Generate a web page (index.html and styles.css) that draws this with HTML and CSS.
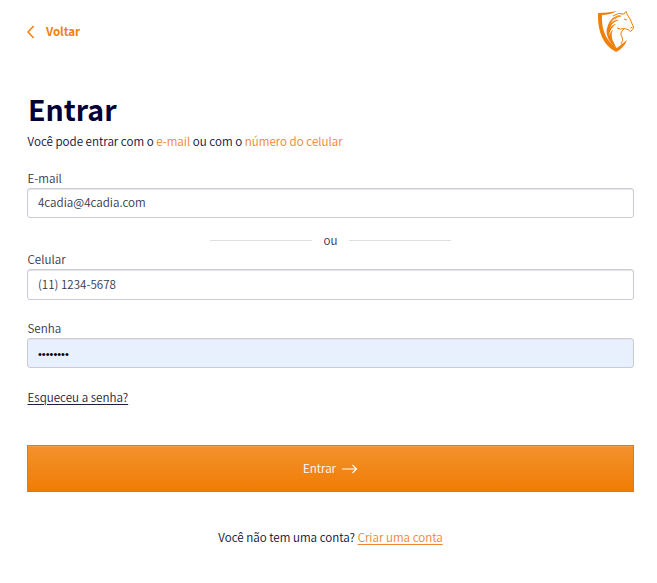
FILE: index.html
```html
<!DOCTYPE html>
<html lang="pt-BR">
<head>
<meta charset="utf-8">
<title>Entrar</title>
<link rel="stylesheet" href="styles.css">
</head>
<body>
<main class="page">
  <header class="topbar">
    <a class="back"><svg width="8" height="14" viewBox="0 0 8 14"><path d="M6.700 1 1 7l5.700 6"/></svg><span>Voltar</span></a>
    <svg class="logo" width="38" height="42" viewBox="0 0 38 42">
      <path class="fill" d="M1 2Q11 2 20 0Q13 4 5 4Q4 27 20 37L30 29Q27 37 19 41Q0 31 1 2Z"/>
      <path class="fill" d="M14 32Q7 23 11 14Q14 5 26 3Q17 6 13 13Q18 8 22 9Q15 11 13 17Q16 13 19 13Q13 17 12 25Q14 20 16 18Q13 25 17 32L19 36Q16 35 14 32Z"/>
      <path class="line" d="M16 5Q21 1 27 3L29 .5 30.500 4 33 8 36.500 16 36 18 33.500 20.500 31 18.500 27 17.500Q23 19 20 17M27 18Q22 22 25 26Q27 29 24 33M27 8l3 1M33.500 17l2-1M24 5q-3 0-6 3"/>
    </svg>
  </header>
  <h1>Entrar</h1>
  <p class="intro">Você pode entrar com o <a>e-mail</a> ou com o <a>número do celular</a></p>
  <form>
    <label for="email">E-mail</label>
    <input id="email" type="text" value="4cadia@4cadia.com">
    <div class="divider"><span>ou</span></div>
    <label for="phone">Celular</label>
    <input class="phone" id="phone" type="text" value="(11) 1234-5678">
    <label for="password">Senha</label>
    <input class="password" id="password" type="text" value="••••••••">
    <a class="forgot">Esqueceu a senha?</a>
    <button type="button"><span>Entrar</span><svg width="16" height="10" viewBox="0 0 16 10"><path d="M0 5h14.500M10.500 1l4 4-4 4"/></svg></button>
  </form>
  <p class="signup">Você não tem uma conta? <a>Criar uma conta</a></p>
</main>
</body>
</html>
```
FILE: styles.css
```css
* { box-sizing: border-box; }
body { margin: 0; background: #fff; color: #0b0b35; font: 350 11.6px/18px "Noto Sans CJK SC", "Noto Sans", sans-serif; }
.page { width: 607px; margin-left: 27px; padding-top: 11px; }
.topbar { display: flex; justify-content: space-between; height: 79px; }
.back { display: flex; align-items: center; gap: 11px; height: 41px; color: #ef800b; font-weight: 700; letter-spacing: -0.05px; }
.back svg { fill: none; stroke: #ef800b; stroke-width: 1.5; }
.back span { height: 20px; }
.logo { margin-right: -1px; }
.logo .fill { fill: #ef800b; }
.logo .line { fill: none; stroke: #ef800b; stroke-width: 1; }
h1 { margin: 0 0 0 1px; height: 43px; font-size: 28.5px; line-height: 37px; font-weight: 700; color: #000033; }
p { margin: 0; }
.intro { height: 37px; line-height: 16px; padding-left: 0.5px; }
.intro a, .signup a { color: #f08232; }
form { display: flex; flex-direction: column; }
label { height: 18px; line-height: 16px; padding-left: 0.5px; color: #34344e; }
input { height: 30px; width: 100%; padding: 0 10px 2px; border: 1px solid #c9ccd8; border-radius: 3px; background: #fff; box-shadow: inset 0 1px 1px #e4e5e9; color: #34344e; font: inherit; outline: 0; }
.divider { display: flex; align-items: center; align-self: center; gap: 12px; width: 241px; height: 33px; padding-top: 11px; color: #34344e; }
.divider::before, .divider::after { content: ""; flex: 1; height: 1px; background: #dfdfdf; }
.phone { height: 31px; margin-bottom: 20px; padding-bottom: 1px; }
.password { padding: 2px 10px 0; background: #e8f0fe; color: #000; font-family: "Liberation Sans", sans-serif; font-size: 11px; }
.forgot { align-self: flex-start; height: 18px; line-height: 16px; margin-top: 21px; padding-left: 0.5px; color: #202044; }
.forgot, .signup a { text-decoration: underline; text-underline-offset: 2px; }
button { display: flex; align-items: center; justify-content: center; gap: 6px; height: 47px; margin-top: 38px; padding: 0; border: 1px solid #df7b0f; background: linear-gradient(#f4922e, #ef7c04); box-shadow: inset 0 1px #f79b3f; color: #fff; font: inherit; }
button span { height: 20px; }
button svg { fill: none; stroke: #fff; stroke-width: 1.1; }
.signup { margin-top: 36px; text-align: center; }
```
